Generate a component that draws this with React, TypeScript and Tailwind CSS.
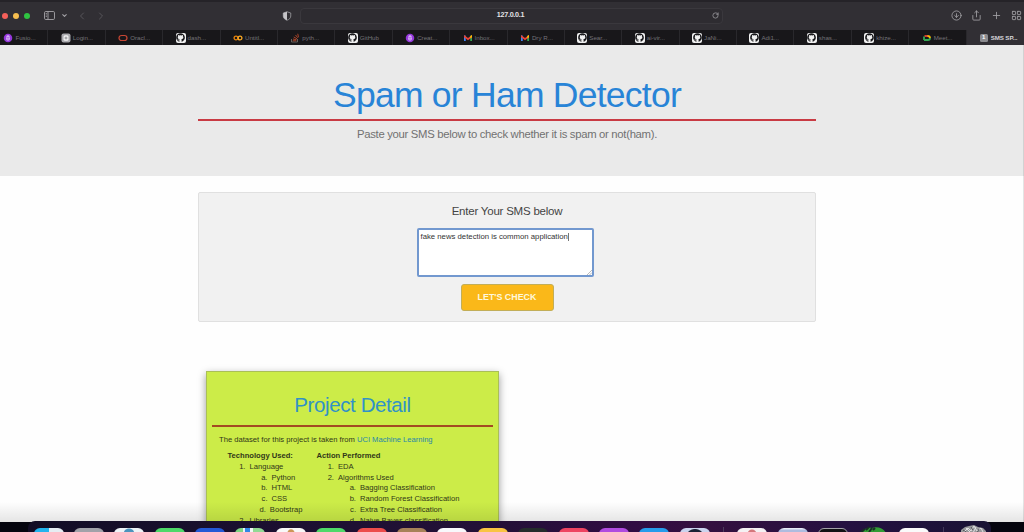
import type { ReactNode } from 'react';
import {
  ArrowDownCircle,
  ChevronDown,
  ChevronLeft,
  ChevronRight,
  LayoutGrid,
  PanelLeft,
  Plus,
  RotateCw,
  Share,
} from 'lucide-react';
import { FaGithub } from 'react-icons/fa';

const OctocatIcon = () => (
  <span className="flex size-2.5 items-center justify-center rounded-[2px] bg-[#f1f1f1]">
    <FaGithub className="size-[9px] text-[#17171a]" />
  </span>
);

const PurpleIcon = () => (
  <svg viewBox="0 0 20 20" className="size-2.5">
    <circle cx="10" cy="10" r="8.500" fill="#9537dc" />
    <rect x="6.500" y="4.500" width="7" height="11" rx="3.500" fill="#e2c3fb" />
    <path d="M10 10v5M7 8.500h6" stroke="#8430cc" strokeWidth="1.300" />
  </svg>
);

const GreyIcon = () => (
  <svg viewBox="0 0 20 20" className="size-2.5">
    <rect x="1" y="1" width="18" height="18" rx="4" fill="#a9a9ad" />
    <rect x="5" y="4.500" width="10" height="11" rx="3" fill="#f2f2f2" />
    <circle cx="10" cy="10" r="2" fill="none" stroke="#77777b" strokeWidth="1.500" />
  </svg>
);

const OracleIcon = () => (
  <svg viewBox="0 0 20 20" className="size-2.5">
    <rect x="2" y="5" width="16" height="10" rx="5" fill="none" stroke="#c74634" strokeWidth="2.400" />
  </svg>
);

const ColabIcon = () => (
  <svg viewBox="0 0 20 20" className="size-2.5" fill="none" strokeWidth="2.600">
    <circle cx="6" cy="10" r="3.800" stroke="#e8830c" />
    <circle cx="14" cy="10" r="3.800" stroke="#f9a825" />
  </svg>
);

const StackIcon = () => (
  <svg viewBox="0 0 20 20" className="size-2.5" fill="none">
    <path d="M3 12v6h12v-6" stroke="#77736f" strokeWidth="1.600" />
    <path
      d="M5.500 15.500h7M6 12l7 1.500M7.500 8l6.500 3.500M11 4l4.500 5.500M15.500 1.500l1.500 7"
      stroke="#b8482a"
      strokeWidth="1.800"
    />
  </svg>
);

const GmailIcon = () => (
  <svg viewBox="0 0 20 20" className="size-2.5">
    <path d="M2 5h3.500v11H2z" fill="#4285f4" />
    <path d="M14.500 5H18v11h-3.500z" fill="#34a853" />
    <path d="M2 4l8 6 8-6v4.500l-8 6-8-6z" fill="#ea4335" />
    <path d="M14.500 6.500L18 4v4.500l-3.500 2.700z" fill="#fbbc04" />
  </svg>
);

const MeetIcon = () => (
  <svg viewBox="0 0 20 20" className="size-2.5" fill="none" strokeWidth="3.600">
    <path d="M5 6h7" stroke="#ea4335" />
    <path d="M4 7v7" stroke="#34a853" />
    <path d="M11 6c4 0 5 1 5 4" stroke="#fbbc04" />
    <path d="M4 14h8c3 0 4-1 4-4" stroke="#34a853" />
  </svg>
);

const NumberIcon = () => (
  <span className="flex size-2 items-center justify-center rounded-[1.5px] bg-[#8b8b8f] text-[6px] font-bold text-white">
    1
  </span>
);

const tabs: { label: string; icon: ReactNode }[] = [
  { label: 'Fusio...', icon: <PurpleIcon /> },
  { label: 'Login...', icon: <GreyIcon /> },
  { label: 'Oracl...', icon: <OracleIcon /> },
  { label: 'dash...', icon: <OctocatIcon /> },
  { label: 'Untitl...', icon: <ColabIcon /> },
  { label: 'pyth...', icon: <StackIcon /> },
  { label: 'GitHub', icon: <OctocatIcon /> },
  { label: 'Creat...', icon: <PurpleIcon /> },
  { label: 'Inbox...', icon: <GmailIcon /> },
  { label: 'Dry R...', icon: <GmailIcon /> },
  { label: 'Sear...', icon: <OctocatIcon /> },
  { label: 'ai-vir...', icon: <OctocatIcon /> },
  { label: 'JaNi...', icon: <OctocatIcon /> },
  { label: 'Adi1...', icon: <OctocatIcon /> },
  { label: 'shas...', icon: <OctocatIcon /> },
  { label: 'khize...', icon: <OctocatIcon /> },
  { label: 'Meet...', icon: <MeetIcon /> },
];

function Toolbar() {
  return (
    <div className="flex h-[30px] items-center border-t-2 border-[#252328] bg-[#312f34] pb-px text-[#a5a4a8]">
      <div className="flex w-[280px] shrink-0 items-center pl-0.5">
        <span className="size-1.5 rounded-full bg-[#f4605a]" />
        <span className="ml-[5px] size-1.5 rounded-full bg-[#f6be4f]" />
        <span className="ml-[5px] size-1.5 rounded-full bg-[#2fc441]" />
        <svg viewBox="0 0 22 18" className="ml-[14px] h-[9px] w-[11px]" fill="none" stroke="currentColor" strokeWidth="1.800">
          <rect x="1" y="1" width="20" height="16" rx="2.500" />
          <path d="M8 1v16M3.500 5h2M3.500 8h2M3.500 11h2" />
        </svg>
        <ChevronDown className="ml-[6px] size-[7px]" strokeWidth={3.5} />
        <ChevronLeft className="ml-[8px] size-3 text-[#57555a]" strokeWidth={2} />
        <ChevronRight className="ml-[7px] size-3 text-[#57555a]" strokeWidth={2} />
      </div>
      <svg viewBox="0 0 20 20" className="ml-[2px] size-[10px]">
        <path d="M10 1.500l7.500 2.500v6c0 4-3 7-7.500 8.500C5.500 17 2.500 14 2.500 10V4z" fill="none" stroke="#a09fa3" strokeWidth="1.600" />
        <path d="M10 1.500v17C5.500 17 2.500 14 2.500 10V4z" fill="#c5c4c8" />
      </svg>
      <div className="ml-[8px] flex h-4 w-[423px] items-center rounded border border-[#3a383d] bg-[#2e2c31]">
        <span className="flex-1 pl-[8px] text-center text-[7.2px] font-bold tracking-[-0.27px] text-[#e4e3e6]">
          127.0.0.1
        </span>
        <RotateCw className="mr-[3px] size-[7px]" strokeWidth={2.5} />
      </div>
      <div className="ml-auto flex items-center gap-[9px] pr-[2.500px]">
        <ArrowDownCircle className="size-[11px]" strokeWidth={1.8} />
        <Share className="size-[11px]" strokeWidth={1.8} />
        <Plus className="size-[11px]" strokeWidth={1.8} />
        <LayoutGrid className="size-[11px]" strokeWidth={1.8} />
      </div>
    </div>
  );
}

function TabBar() {
  return (
    <div className="flex h-[15px] overflow-hidden bg-[#18171a] text-[6.2px] text-[#737277]">
      <div className="-ml-[9px] flex">
        {tabs.map((tab, i) => (
          <div
            key={i}
            className="flex w-[57.4px] shrink-0 items-center border-r border-[#29282c] pl-[12.4px] whitespace-nowrap"
          >
            {tab.icon}
            <span className="ml-[2px] leading-[9px]">{tab.label}</span>
          </div>
        ))}
      </div>
      <div className="flex flex-1 items-center bg-[#312f34] pl-[13px] font-bold whitespace-nowrap text-[#d5d4d8]">
        <NumberIcon />
        <span className="ml-[3px] leading-[9px] tracking-[-0.1px]">SMS SP...</span>
      </div>
    </div>
  );
}

function Item({ marker, children }: { marker: string; children: ReactNode }) {
  return (
    <li className="flex gap-1 whitespace-nowrap">
      <span className="w-2 text-right">{marker}</span>
      <span>{children}</span>
    </li>
  );
}

function ProjectCard() {
  return (
    <article className="mt-[49px] ml-2 h-[240px] w-[293px] border border-[#aabf57] bg-[#ccec48] px-[5px] pt-[17px] shadow-[0_3px_8px_rgba(0,0,0,0.4)]">
      <h2 className="h-[38px] border-b-2 border-[#a34a22] text-center text-[20.500px] leading-[31px] tracking-[-0.4px] text-[#3192c6]">
        Project Detail
      </h2>
      <p className="mt-[6px] pl-[7px] text-[7.62px] leading-[14px] whitespace-nowrap text-[#303719]">
        The dataset for this project is taken from <a className="text-[#2787a8]">UCI Machine Learning</a>
      </p>
      <div className="mt-[4px] flex text-[7.62px] leading-[10.8px] text-[#303719]">
        <section className="w-[89px] pl-[15.500px]">
          <h3 className="font-bold whitespace-nowrap">Technology Used:</h3>
          <ol className="pl-[10px]">
            <Item marker="1.">Language</Item>
            <ol className="pl-[22px]">
              <Item marker="a.">Python</Item>
              <Item marker="b.">HTML</Item>
              <Item marker="c.">CSS</Item>
              <Item marker="d.">Bootstrap</Item>
            </ol>
            <Item marker="2.">Libraries</Item>
          </ol>
        </section>
        <section className="pl-[15.500px]">
          <h3 className="font-bold">Action Performed</h3>
          <ol className="pl-[9.5px]">
            <Item marker="1.">EDA</Item>
            <Item marker="2.">Algorithms Used</Item>
            <ol className="pl-[22px]">
              <Item marker="a.">Bagging Classification</Item>
              <Item marker="b.">Random Forest Classification</Item>
              <Item marker="c.">Extra Tree Classification</Item>
              <Item marker="d.">Naive Bayes classification</Item>
            </ol>
          </ol>
        </section>
      </div>
    </article>
  );
}

const apps = [
  'bg-[linear-gradient(90deg,#23b4ee_50%,#e5edf3_50%)]',
  'bg-[#a1a2a9]',
  'bg-[radial-gradient(circle_at_50%_20%,#4d94bd_0_5px,#edf3f7_6px)]',
  'bg-[#4ed969]',
  'bg-[#2459d6]',
  'bg-[linear-gradient(90deg,#7fd583_25%,#e9f3f6_25%_32%,#3186e6_32%_50%,#f1f6f6_50%_60%,#91d994_60%)]',
  'bg-[radial-gradient(circle_at_50%_16%,#cc9657_0_3px,#f8f8f8_4px)]',
  'bg-[#4ed969]',
  'bg-[#ec4c4b]',
  'bg-[#a78258]',
  'bg-[#f8f8fb]',
  'bg-[#f9c442]',
  'bg-[#242c2b]',
  'bg-[#ee4461]',
  'bg-[#b04be0]',
  'bg-[#269ceb]',
  'bg-[radial-gradient(circle_at_50%_35%,#1b2235_0_9px,#cbd4ee_10px)]',
];

const recent = [
  'bg-[radial-gradient(circle_at_50%_20%,#d4777c_0_4px,#f4f1f3_5px)]',
  'bg-[linear-gradient(#e8edf8_1px,#aebcdf_2px)]',
  'bg-[#111114] border border-[#a3a2a8]',
];

function Dock() {
  return (
    <footer className="absolute inset-x-0 bottom-0 h-[10px] bg-[#05050e]">
      <div className="absolute -top-px left-7 flex h-[11px] w-[963px] overflow-hidden rounded-t-[7px] bg-[linear-gradient(90deg,#120d25,#1c1031_28%,#241038_50%,#310c43_63%,#35103f_70%,#251141_85%,#191334)] pt-[7px] pl-[5.500px]">
        {apps.map((fill, i) => (
          <span key={i} className={`mr-[10.4px] h-[30px] w-[30px] shrink-0 rounded-[6px] ${fill}`} />
        ))}
        <span className="-mt-px mr-[13px] ml-[3px] h-3 w-px shrink-0 bg-[#4d3c5c]" />
        {recent.map((fill, i) => (
          <span key={i} className={`mr-[10.4px] h-[30px] w-[30px] shrink-0 rounded-[6px] ${fill}`} />
        ))}
        <svg viewBox="0 0 30 7" className="-mt-[2px] mr-[10.4px] h-[7px] w-[30px] shrink-0">
          <path d="M5 7c0-4 5-6 9-5 6-2 12 1 14 5z" fill="#329c35" />
          <path d="M3 6l4-3M8 4l3-3M11 6l3-4M15 4l2-2" stroke="#192e25" strokeWidth="2" />
        </svg>
        <span className="h-[30px] w-[30px] shrink-0 rounded-[6px] bg-[#fafafa]" />
        <span className="-mt-px ml-[14px] h-3 w-px shrink-0 bg-[#43395a]" />
        <svg viewBox="0 0 28 10" className="-mt-[4px] ml-[15px] h-[10px] w-7 shrink-0">
          <path d="M2 10V6l4-3 4-1 5-1 4 2 5 1 3 3v3z" fill="#999a9c" />
          <path d="M5 8l4-4 3 3 3-5 3 5 4-3 2 4M7 4l5 5M17 3l-3 6" stroke="#e0e0e2" fill="none" />
          <path d="M4 6l3 2M12 3l2 3M20 5l-2 4" stroke="#515258" />
        </svg>
      </div>
    </footer>
  );
}

export default function App() {
  return (
    <div className="relative h-[532px] w-full overflow-hidden bg-[#fefefe] font-['Liberation_Sans',sans-serif]">
      <Toolbar />
      <TabBar />
      <header className="h-[131px] bg-[#eaeaea] pt-[27px] text-center">
        <div className="ml-[198px] w-[618px]">
          <h1 className="h-[49px] border-b-2 border-[#c93b44] text-[35.500px] leading-[46px] tracking-[-0.75px] whitespace-nowrap text-[#2884d7]">
            Spam or Ham Detector
          </h1>
          <p className="mt-[5px] text-[11.3px] leading-[16px] tracking-[-0.3px] whitespace-nowrap text-[#717171]">
            Paste your SMS below to check whether it is spam or not(ham).
          </p>
        </div>
      </header>
      <main className="ml-[198px] w-[618px] pt-4">
        <form className="flex h-[130px] flex-col items-center rounded-[2px] border border-[#e0e0e0] bg-[#f1f1f1] pt-[10px]">
          <label className="text-[11.500px] leading-4 tracking-[-0.22px] text-[#444444]">Enter Your SMS below</label>
          <div
            role="textbox"
            aria-multiline="true"
            className="relative mt-[9px] mr-[3px] h-[49px] w-[177px] rounded-[2px] border-2 border-[#7298cf] bg-white pt-px pl-[1.500px] text-[7.75px] leading-[11px] whitespace-nowrap text-[#333333]"
          >
            fake news detection is common application
            <span className="inline-block h-2 w-px bg-[#777777] align-middle" />
            <svg viewBox="0 0 6 6" className="absolute right-0 bottom-0 size-[5px]">
              <path d="M0 6l6-6M3 6l3-3" stroke="#999999" strokeWidth="0.800" />
            </svg>
          </div>
          <button
            type="button"
            className="mt-[7px] h-[27px] w-[93px] rounded-[3px] border border-[#c2ae58] bg-[#fab819] text-[8.9px] font-bold text-[#fff8dd]"
          >
            LET'S CHECK
          </button>
        </form>
        <ProjectCard />
      </main>
      <div className="absolute inset-y-0 right-0 mt-[45px] w-px bg-black/10" />
      <div className="absolute inset-x-0 bottom-[10px] h-5 bg-linear-to-b from-transparent to-black/10" />
      <Dock />
    </div>
  );
}
